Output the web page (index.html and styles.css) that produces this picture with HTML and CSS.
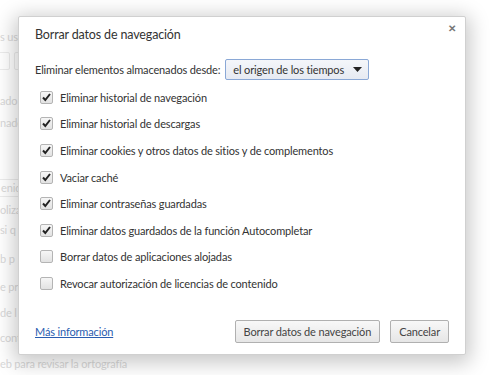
FILE: index.html
```html
<!DOCTYPE html>
<html lang="es">
<head>
    <meta charset="UTF-8">
    <title>Borrar datos de navegación</title>
    <link rel="stylesheet" href="styles.css">
</head>
<body>
    <div class="page">
        <p class="line l-top">s usar un servicio</p>
        <div class="boxes"><span class="pbox small"></span><span class="pbox"></span></div>
        <p class="line l-ado">ado</p>
        <p class="line">nado</p>
        <div class="pbutton">enido</div>
        <p class="line l-a">oliza</p>
        <p class="line l-b">si q</p>
        <p class="line l-c">b p</p>
        <p class="line l-d">e pre</p>
        <p class="line l-e">de l</p>
        <p class="line l-f">cont</p>
        <p class="line">eb para revisar la ortografía</p>
    </div>

    <div class="overlay">
        <div class="dialog">
            <div class="dialog-head">
                <h1>Borrar datos de navegación</h1>
                <span class="close">&#10005;</span>
            </div>

            <div class="range-row">
                <span>Eliminar elementos almacenados desde:</span>
                <div class="select">
                    <span>el origen de los tiempos</span>
                    <svg width="9" height="5" viewBox="0 0 9 5"><path d="M0 0h9L4.5 5z" fill="#222"/></svg>
                </div>
            </div>

            <ul class="checks">
                <li><span class="box on"></span>Eliminar historial de navegación</li>
                <li><span class="box on"></span>Eliminar historial de descargas</li>
                <li><span class="box on"></span>Eliminar cookies y otros datos de sitios y de complementos</li>
                <li><span class="box on"></span>Vaciar caché</li>
                <li><span class="box on"></span>Eliminar contraseñas guardadas</li>
                <li><span class="box on"></span>Eliminar datos guardados de la función Autocompletar</li>
                <li><span class="box"></span>Borrar datos de aplicaciones alojadas</li>
                <li><span class="box"></span>Revocar autorización de licencias de contenido</li>
            </ul>

            <div class="dialog-foot">
                <a href="#">Más información</a>
                <div class="buttons">
                    <button>Borrar datos de navegación</button>
                    <button>Cancelar</button>
                </div>
            </div>
        </div>
    </div>
</body>
</html>
```

FILE: styles.css
```css
body {
    margin: 0;
    width: 500px;
    height: 375px;
    overflow: hidden;
    background: #fff;
    font-family: Lato, "Open Sans", sans-serif;
    font-size: 11px;
    letter-spacing: -0.15px;
    color: #333;
}

/* faded settings page behind the dialog */
.page {
    padding-top: 30px;
    color: #c4c4c4;
}

.line {
    margin: 0 0 8px;
    line-height: 14px;
    white-space: nowrap;
}

.l-ado {
    margin-top: 24px;
}

.l-a { margin-bottom: 6px; }
.l-b { margin-bottom: 15px; }
.l-c { margin-bottom: 14px; }
.l-d { margin-bottom: 12px; }
.l-e { margin-bottom: 11px; }
.l-f { margin-bottom: 12px; }

.boxes {
    display: flex;
    gap: 4px;
    margin: 2px 0 0 -4px;
    height: 18px;
}

.pbox {
    width: 40px;
    border: 1px solid #e2e2e2;
    border-radius: 2px;
}

.pbox.small {
    width: 12px;
}

.pbutton {
    width: 60px;
    margin: 49px 0 6px -28px;
    padding-left: 28px;
    height: 16px;
    line-height: 16px;
    border: 1px solid #e2e2e2;
    border-radius: 2px;
}

.overlay {
    position: absolute;
    inset: 0;
    background: rgba(255, 255, 255, 0.35);
    padding: 16px 0 0 18px;
}

.dialog {
    width: 448px;
    height: 339px;
    box-sizing: border-box;
    background: #fff;
    border: 1px solid #d0d0d0;
    border-radius: 2px;
    box-shadow: 0 4px 20px 4px rgba(0, 0, 0, 0.22);
    padding: 0 16px;
    display: flex;
    flex-direction: column;
}

.dialog-head {
    display: flex;
    justify-content: space-between;
    align-items: flex-start;
    height: 34px;
}

.dialog-head h1 {
    margin: 9px 0 0;
    font-size: 12.5px;
    font-weight: normal;
    line-height: 18px;
    color: #333;
}

.close {
    margin: 5px -7px 0 0;
    font-size: 10px;
    font-weight: bold;
    color: #777;
}

.range-row {
    display: flex;
    align-items: center;
    gap: 5px;
    margin-top: 7px;
    height: 22px;
    white-space: nowrap;
}

.select {
    display: flex;
    align-items: center;
    justify-content: space-between;
    width: 144px;
    height: 21px;
    box-sizing: border-box;
    padding: 0 6px 0 7px;
    border: 1px solid #8aa8d6;
    border-radius: 2px;
    background: linear-gradient(#f4f6fa, #e6eaf2);
    color: #333;
}

.checks {
    list-style: none;
    margin: 4px 0 0 5px;
    padding: 0;
}

.checks li {
    display: flex;
    align-items: center;
    gap: 7px;
    height: 26.6px;
}

.box {
    width: 13px;
    height: 13px;
    box-sizing: border-box;
    border: 1px solid #b4b4b4;
    border-radius: 2px;
    background: linear-gradient(#f6f6f6, #e2e2e2);
}

.box.on {
    background: url("data:image/svg+xml,%3Csvg xmlns='http://www.w3.org/2000/svg' width='11' height='11'%3E%3Cpath d='M2 5.5l2.3 2.5L9 2' fill='none' stroke='%23222' stroke-width='2'/%3E%3C/svg%3E") center no-repeat, linear-gradient(#f6f6f6, #e2e2e2);
}

.dialog-foot {
    display: flex;
    justify-content: space-between;
    align-items: center;
    margin-top: auto;
    margin-bottom: 11px;
}

.dialog-foot a {
    color: #2a5db0;
}

.buttons {
    display: flex;
    gap: 10px;
}

button {
    height: 23px;
    padding: 0 8px;
    font-family: inherit;
    font-size: 11px;
    letter-spacing: -0.15px;
    color: #444;
    border: 1px solid #b0b0b0;
    border-radius: 2px;
    background: linear-gradient(#f8f8f8, #e6e6e6);
}
```
